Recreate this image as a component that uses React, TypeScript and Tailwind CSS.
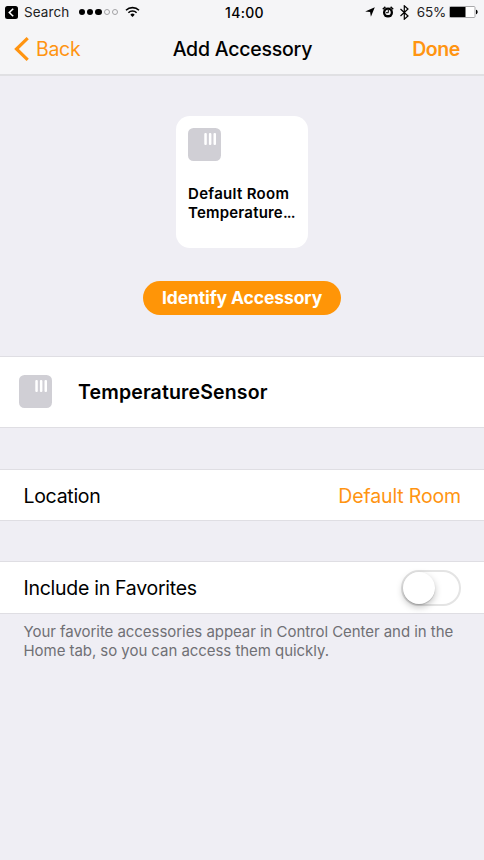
import React from 'react';

function SensorIcon() {
  return (
    <svg width="33" height="33" viewBox="0 0 33 33" className="shrink-0">
      <rect width="33" height="33" rx="5.5" fill="#d0cfd5" />
      <g fill="#fff">
        <rect x="16.3" y="5" width="2.5" height="12" rx="1" />
        <rect x="20.9" y="5" width="2.5" height="12" rx="1" />
        <rect x="25.5" y="5" width="2.5" height="12" rx="1" />
      </g>
    </svg>
  );
}

function StatusBar() {
  return (
    <div className="grid h-[24px] grid-cols-3 items-center pl-[5px] pr-[6px]">
      <div className="flex items-center">
        <svg width="13" height="13" viewBox="0 0 13 13" className="shrink-0">
          <rect width="13" height="13" rx="2.5" fill="#000" />
          <path d="M8.2 2.7 4.3 6.5l3.9 3.8" fill="none" stroke="#fff" strokeWidth="1.6" />
        </svg>
        <span className="ml-[6px] w-[46px] text-[13.5px] tracking-[0.1px] whitespace-nowrap text-[#222]">Search</span>
        <div className="ml-[9px] flex gap-[2px]">
          <span className="h-[6.2px] w-[6.2px] rounded-full bg-black" />
          <span className="h-[6.2px] w-[6.2px] rounded-full bg-black" />
          <span className="h-[6.2px] w-[6.2px] rounded-full bg-black" />
          <span className="h-[6.2px] w-[6.2px] rounded-full border border-[#a2a2a5]" />
          <span className="h-[6.2px] w-[6.2px] rounded-full border border-[#a2a2a5]" />
        </div>
        <svg width="15" height="12" viewBox="0 0 15 12" className="ml-[7px] shrink-0" fill="none" stroke="#000" strokeWidth="1.6">
          <path d="M1 4.3a9.2 9.2 0 0 1 13 0" />
          <path d="M3.4 6.7a5.8 5.8 0 0 1 8.2 0" />
          <path d="M5.3 8.7a3.1 3.1 0 0 1 4.4 0L7.5 10.9z" fill="#000" stroke="none" />
        </svg>
      </div>
      <div className="pl-[6px] text-center text-[14px] font-[450] tracking-[0.3px]">14:00</div>
      <div className="flex items-center justify-end">
        <svg width="10" height="10" viewBox="0 0 10 10" className="mr-[7px]">
          <path d="M9.8.2 5.9 9.8 5.1 5 .2 4.4z" />
        </svg>
        <svg width="12" height="12" viewBox="0 0 12 12" className="mr-[6px]">
          <circle cx="6" cy="6.6" r="5" />
          <path d="M.8 3.2 3.4.9M11.2 3.2 8.6.9" fill="none" stroke="#000" strokeWidth="1.5" />
          <circle cx="6" cy="6.4" r="2.7" fill="#f5f5f7" />
          <path d="M6.3 4v2.7H4" fill="none" stroke="#000" strokeWidth="1" />
        </svg>
        <svg width="9" height="15" viewBox="0 0 9 15" className="mr-[8px]" fill="none" stroke="#000" strokeWidth="1.2">
          <path d="M.5 4 8 11l-3.7 3.2V.8L8 4 .5 11" />
        </svg>
        <span className="mr-[3px] text-[13.5px] tracking-[-0.2px] text-[#222]">65%</span>
        <svg width="29" height="12" viewBox="0 0 29 12">
          <rect x=".5" y=".5" width="25.5" height="11" rx="1" fill="#fff" stroke="#a9a9ab" />
          <rect x="1" y="1" width="15.5" height="10" />
          <path d="M27 3.8c2.2.5 2.2 3.9 0 4.4z" />
        </svg>
      </div>
    </div>
  );
}

export default function App() {
  return (
    <div className="flex h-[860px] w-[484px] flex-col overflow-hidden bg-[#efeef4] font-[Inter,sans-serif] text-black">
      <header className="h-[76px] shrink-0 border-b-2 border-[#e0e0e3] bg-[#f5f5f7]">
        <StatusBar />
        <nav className="grid h-[50px] grid-cols-3 items-center pr-[24px] pl-[14px] text-[19.5px]">
          <button className="flex items-center text-[#ff9411]">
            <svg width="15" height="24" viewBox="0 0 15 24" fill="none" stroke="#ff9411" strokeWidth="3.2">
              <path d="M13.7 1.2 2.5 12l11.2 10.8" />
            </svg>
            <span className="ml-[7px] pt-[2px] font-[370] tracking-[-0.3px]">Back</span>
          </button>
          <h1 className="pt-[2px] pl-[10px] text-center font-medium tracking-[-0.23px] whitespace-nowrap">Add Accessory</h1>
          <button className="pt-[2px] text-right font-semibold tracking-[-0.4px] text-[#ff9411]">Done</button>
        </nav>
      </header>
      <section className="flex h-[280px] shrink-0 flex-col items-center pt-[40px]">
        <div className="h-[132px] w-[132px] rounded-[14px] bg-white pt-[12px] pl-[12px]">
          <SensorIcon />
          <p className="mt-[24px] text-[15px] leading-[18.5px] font-semibold tracking-[0.3px] whitespace-nowrap">
            Default Room
            <br />
            <span className="tracking-[0.2px]">Temperature</span>
            <span className="tracking-[-0.9px]">...</span>
          </p>
        </div>
        <button className="mt-[33px] h-[34px] w-[198px] rounded-full bg-[#ff9507] text-[17.5px] font-bold tracking-[-0.1px] whitespace-nowrap text-white">Identify Accessory</button>
      </section>
      <section className="flex h-[72px] shrink-0 items-center border-y border-[#dfdee3] bg-white pb-[2px] pl-[18.5px]">
        <SensorIcon />
        <span className="ml-[26.5px] pt-[3px] text-[19.5px] font-semibold tracking-[0.15px]">TemperatureSensor</span>
      </section>
      <section className="mt-[41px] flex h-[52px] shrink-0 items-center justify-between border-y border-[#dfdee3] bg-white pt-[3px] pr-[23px] pl-[23.5px] text-[19.5px] font-[370]">
        <span className="tracking-[-0.3px]">Location</span>
        <span className="tracking-[-0.15px] text-[#ff9411]">Default Room</span>
      </section>
      <section className="mt-[40px] flex h-[53px] shrink-0 items-center justify-between border-y border-[#dfdee3] bg-white pr-[23px] pl-[23.5px] text-[19.5px] font-[370]">
        <span className="pt-[2px] tracking-[-0.28px]">Include in Favorites</span>
        <button className="h-[36px] w-[60px] rounded-full border-2 border-[#e4e4e4] bg-white">
          <span className="block h-[32px] w-[32px] rounded-full bg-white shadow-[0_3px_7px_rgba(0,0,0,0.25),0_1px_1px_rgba(0,0,0,0.15)]" />
        </button>
      </section>
      <p className="mt-[9px] ml-[23.5px] text-[15px] leading-[18.5px] tracking-[-0.05px] whitespace-nowrap text-[#707075]">
        Your favorite accessories appear in Control Center and in the
        <br />
        Home tab, so you can access them quickly.
      </p>
    </div>
  );
}
